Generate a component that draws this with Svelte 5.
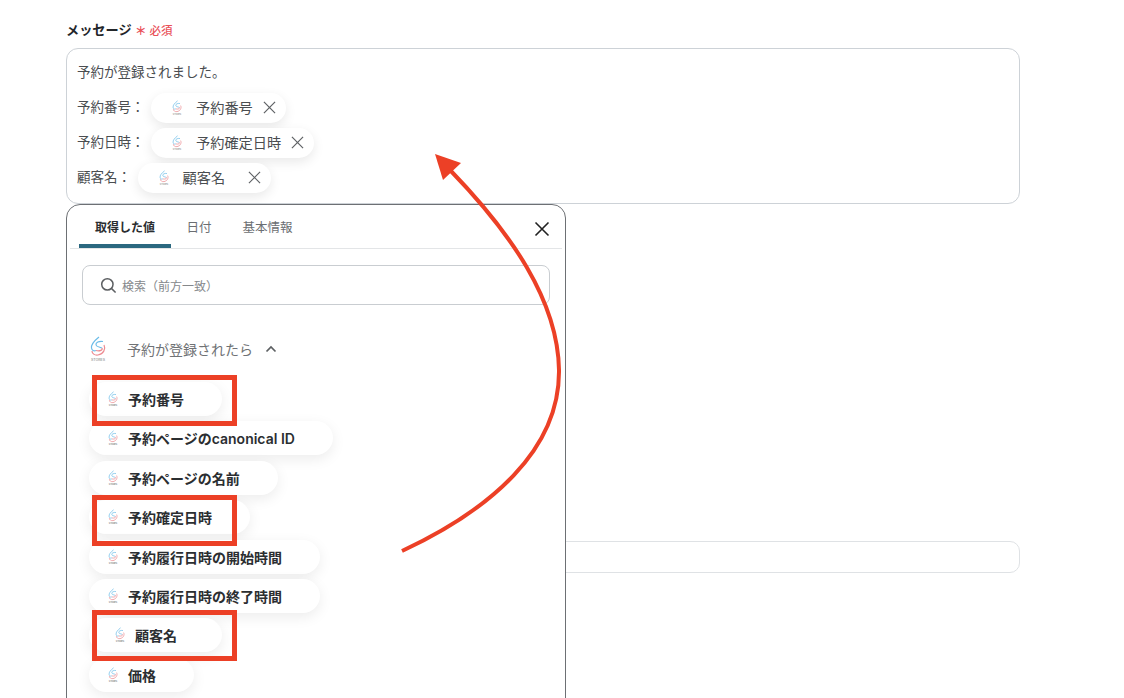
<script>
  const lines = [
    { label: '予約番号：', name: '予約番号' },
    { label: '予約日時：', name: '予約確定日時' },
    { label: '顧客名：', name: '顧客名' }
  ]
  const tabs = ['取得した値', '日付', '基本情報']
  const outputs = [
    { name: '予約番号' },
    { name: '予約ページのcanonical ID' },
    { name: '予約ページの名前' },
    { name: '予約確定日時' },
    { name: '予約履行日時の開始時間' },
    { name: '予約履行日時の終了時間' },
    { name: '顧客名', wide: true },
    { name: '価格' }
  ]
  const marks = [375, 495, 610]
</script>

{#snippet logo(cls)}
  <svg class={cls} viewBox="0 0 20 26" aria-hidden="true">
    <path d="M11 1 C6 5 3 8.5 3.5 12 C3.8 14.5 6 15.5 8 14.5 M15 5.5 C11 4.8 7.5 6.5 8 9 C8.4 10.8 11.5 11 14 12" fill="none" stroke="#6bbce8" stroke-width="1.2"/>
    <path d="M16 9 C18 13 15.5 18 10 19 C6.5 19.5 4 17.5 4 15 M14 12 C15 14 12 15.5 8 14.5" fill="none" stroke="#ec8a90" stroke-width="1.2"/>
    <text x="10" y="25" text-anchor="middle" class="logo-text">STORES</text>
  </svg>
{/snippet}

<div class="page">
  <div class="field">
    <div class="label">メッセージ <span class="req"><b>＊</b> 必須</span></div>
    <div class="editor">
      <div class="row">予約が登録されました。</div>
      {#each lines as line}
        <div class="row">
          <span>{line.label}</span>
          <span class="chip">
            {@render logo('chip-logo')}
            <span class="chip-name">{line.name}</span>
            <svg class="chip-x" viewBox="0 0 14 14" aria-hidden="true">
              <path d="M1 1 L13 13 M13 1 L1 13" stroke="#5f6265" stroke-width="1.3" fill="none"/>
            </svg>
          </span>
        </div>
      {/each}
    </div>
  </div>

  <div class="second-input"></div>

  <div class="panel">
    <div class="tabs">
      {#each tabs as tab, i}
        <div class="tab" class:active={i === 0}>{tab}</div>
      {/each}
      <svg class="close" viewBox="0 0 16 16" aria-hidden="true">
        <path d="M1.5 1.5 L14.5 14.5 M14.5 1.5 L1.5 14.5" stroke="#222" stroke-width="1.6" fill="none"/>
      </svg>
    </div>

    <div class="search">
      <svg class="search-icon" viewBox="0 0 18 18" aria-hidden="true">
        <circle cx="7.8" cy="7.8" r="6" fill="none" stroke="#5c5f62" stroke-width="1.6"/>
        <path d="M12.3 12.3 L16.5 16.5" stroke="#5c5f62" stroke-width="1.6"/>
      </svg>
      <span>検索（前方一致）</span>
    </div>

    <div class="group">
      {@render logo('group-logo')}
      <span>予約が登録されたら</span>
      <svg class="chevron" viewBox="0 0 12 8" aria-hidden="true">
        <path d="M1.5 6.5 L6 2 L10.5 6.5" stroke="#5c5f62" stroke-width="1.7" fill="none"/>
      </svg>
    </div>

    <div class="outputs">
      {#each outputs as item}
        <div class="output" class:wide={item.wide}>
          {@render logo('chip-logo')}
          <span>{item.name}</span>
        </div>
      {/each}
    </div>
  </div>

  {#each marks as top}
    <div class="mark" style="top: {top}px"></div>
  {/each}

  <svg class="arrow" viewBox="0 0 1124 698" aria-hidden="true">
    <path d="M402 551 C490 510 560 450 559 370 C558 300 510 232 450 170" fill="none" stroke="#ec4026" stroke-width="4"/>
    <path d="M435 154 L461 163 L443 180 Z" fill="#ec4026"/>
  </svg>
</div>

<style>
  :global(body) {
    margin: 0;
    background: #fff;
  }
  .page {
    position: relative;
    height: 698px;
    overflow: hidden;
    box-sizing: border-box;
    padding: 20px 104px 0 66px;
    font-family: Inter, "Noto Sans CJK JP", sans-serif;
    color: #4a4d50;
    font-size: 13.5px;
  }
  .label {
    height: 20px;
    line-height: 20px;
    margin-bottom: 8px;
    font-size: 13.2px;
    font-weight: 600;
    color: #23262a;
  }
  .req {
    font-size: 11.5px;
    font-weight: 500;
    color: #e9525a;
  }
  .req b {
    font-weight: 700;
  }
  .editor {
    height: 156px;
    box-sizing: border-box;
    border: 1px solid #cdd2d7;
    border-radius: 12px;
    padding: 4px 10px 8px;
  }
  .row {
    display: flex;
    align-items: center;
    height: 35px;
  }
  .chip {
    display: flex;
    align-items: center;
    height: 30px;
    min-width: 133px;
    box-sizing: border-box;
    margin: 4px 0 0 6.5px;
    padding: 0 10px 0 20px;
    border-radius: 15px;
    background: #fff;
    box-shadow: 0 4px 12px rgba(0, 0, 0, 0.09);
    font-size: 14.2px;
  }
  .chip-name {
    margin: -2px 0 0 13px;
  }
  .chip-logo {
    width: 12px;
    height: 16px;
    flex: none;
  }
  .chip-x {
    width: 13px;
    height: 13px;
    margin-left: auto;
    padding-left: 10px;
    flex: none;
  }
  .logo-text {
    font-size: 3.6px;
    fill: #777;
  }
  .second-input {
    height: 30px;
    margin-top: 337px;
    border: 1px solid #dfe2e5;
    border-radius: 10px;
  }
  .panel {
    position: absolute;
    left: 66px;
    top: 204px;
    width: 500px;
    height: 520px;
    box-sizing: border-box;
    border: 1px solid #6d7074;
    border-radius: 14px;
    background: #fff;
    padding: 0 3px;
  }
  .tabs {
    display: flex;
    position: relative;
    height: 43px;
    padding-left: 9px;
    border-bottom: 1px solid #e3e5e7;
  }
  .tab {
    padding: 14px 15.5px 0;
    border-radius: 4px 4px 0 0;
    font-size: 12.5px;
    line-height: 18px;
    color: #6b6e72;
    box-sizing: border-box;
  }
  .tab.active {
    width: 92px;
    padding: 14px 16px 0;
    font-size: 12px;
    color: #2a2d30;
    font-weight: 600;
    border-bottom: 4px solid #2b6880;
  }
  .close {
    position: absolute;
    right: 12px;
    top: 16px;
    width: 16px;
    height: 16px;
  }
  .search {
    display: flex;
    align-items: center;
    gap: 5px;
    height: 40px;
    box-sizing: border-box;
    margin: 16px 12px 0;
    padding-left: 17px;
    border: 1px solid #c9cdd1;
    border-radius: 8px;
    font-size: 12px;
    color: #85888b;
  }
  .search-icon {
    width: 17px;
    height: 17px;
  }
  .group {
    display: flex;
    align-items: center;
    height: 30px;
    margin: 29px 0 0 18px;
    font-size: 14px;
    color: #6f7275;
  }
  .group-logo {
    width: 20px;
    height: 26px;
    margin-right: 19px;
  }
  .chevron {
    width: 12px;
    height: 8px;
    margin-left: 12px;
  }
  .outputs {
    display: flex;
    flex-direction: column;
    align-items: flex-start;
    gap: 5.4px;
    margin: 18px 0 0 19px;
  }
  .output {
    display: flex;
    align-items: center;
    gap: 9px;
    height: 34px;
    padding: 0 38px 0 18px;
    border-radius: 17px;
    background: #fff;
    box-shadow: 0 4px 14px rgba(0, 0, 0, 0.08);
    font-size: 14px;
    font-weight: 600;
    color: #2b2e31;
  }
  .output.wide {
    padding: 0 45px 0 25px;
  }
  .mark {
    position: absolute;
    left: 92px;
    width: 145px;
    height: 51px;
    box-sizing: border-box;
    border: 5px solid #ec4026;
  }
  .arrow {
    position: absolute;
    left: 0;
    top: 0;
    width: 1124px;
    height: 698px;
  }
</style>
